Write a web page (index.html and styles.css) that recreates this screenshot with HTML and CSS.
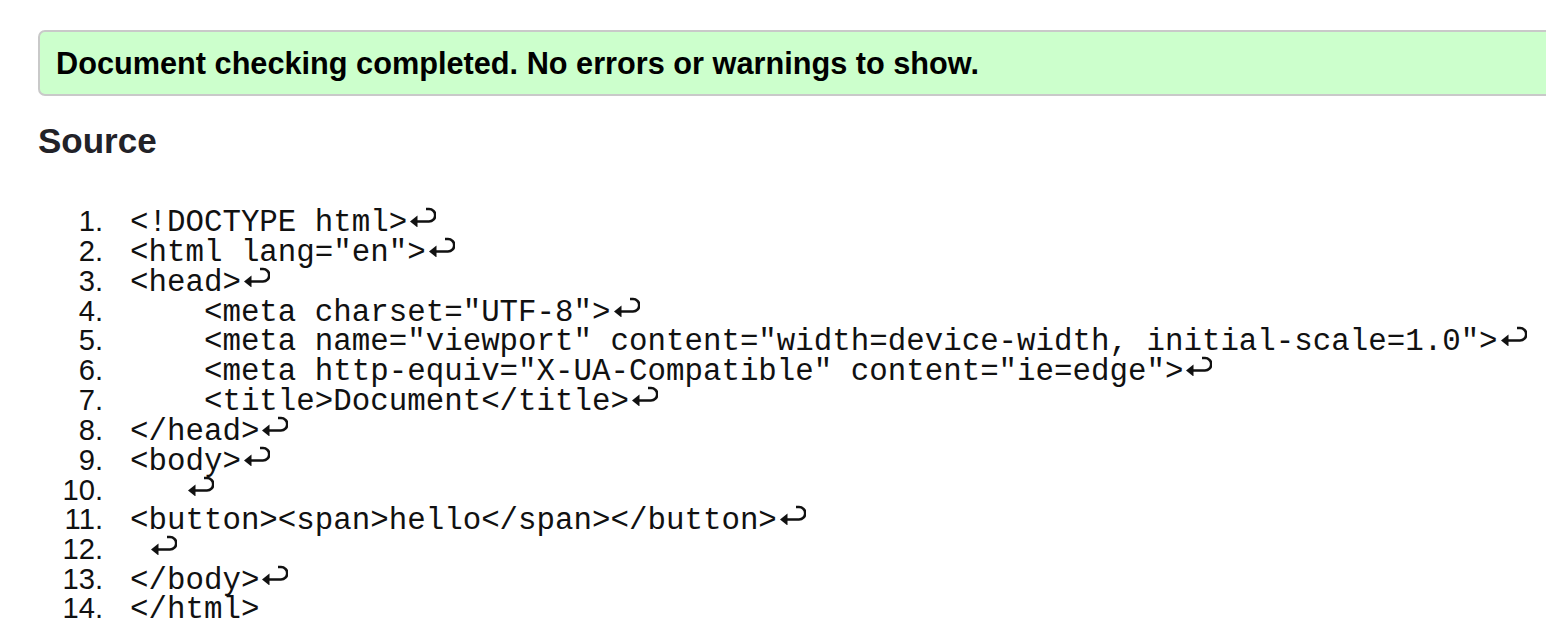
FILE: index.html
```html
<!DOCTYPE html>
<html lang="en">
<head>
<meta charset="UTF-8">
<title>Validation result</title>
<link rel="stylesheet" href="styles.css">
</head>
<body>
<svg class="defs" width="0" height="0" aria-hidden="true">
  <symbol id="lf" viewBox="0 0 26 20">
    <path d="M5 14.5 H19 A6.25 6.25 0 0 0 19 2 H16" fill="none" stroke="#111" stroke-width="2.7" stroke-linecap="butt"/>
    <path d="M0 14.5 L7.5 8.5 L7.5 20.5 Z" fill="#111"/>
  </symbol>
</svg>
<main class="page">
  <div class="status">Document checking completed. No errors or warnings to show.</div>
  <h2 class="heading">Source</h2>
  <ol class="source">
    <li><code>&lt;!DOCTYPE html&gt;<svg class="lf"><use href="#lf"/></svg></code></li>
    <li><code>&lt;html lang="en"&gt;<svg class="lf"><use href="#lf"/></svg></code></li>
    <li><code>&lt;head&gt;<svg class="lf"><use href="#lf"/></svg></code></li>
    <li><code>    &lt;meta charset="UTF-8"&gt;<svg class="lf"><use href="#lf"/></svg></code></li>
    <li><code>    &lt;meta name="viewport" content="width=device-width, initial-scale=1.0"&gt;<svg class="lf"><use href="#lf"/></svg></code></li>
    <li><code>    &lt;meta http-equiv="X-UA-Compatible" content="ie=edge"&gt;<svg class="lf"><use href="#lf"/></svg></code></li>
    <li><code>    &lt;title&gt;Document&lt;/title&gt;<svg class="lf"><use href="#lf"/></svg></code></li>
    <li><code>&lt;/head&gt;<svg class="lf"><use href="#lf"/></svg></code></li>
    <li><code>&lt;body&gt;<svg class="lf"><use href="#lf"/></svg></code></li>
    <li><code>   <svg class="lf"><use href="#lf"/></svg></code></li>
    <li><code>&lt;button&gt;&lt;span&gt;hello&lt;/span&gt;&lt;/button&gt;<svg class="lf"><use href="#lf"/></svg></code></li>
    <li><code> <svg class="lf"><use href="#lf"/></svg></code></li>
    <li><code>&lt;/body&gt;<svg class="lf"><use href="#lf"/></svg></code></li>
    <li><code>&lt;/html&gt;</code></li>
  </ol>
</main>
</body>
</html>
```

FILE: styles.css
```css
html {
  overflow: hidden;
  background: #fff;
}

body {
  margin: 0;
  font-family: "Liberation Sans", Arial, sans-serif;
  color: #000;
}

.defs {
  position: absolute;
  width: 0;
  height: 0;
}

.page {
  padding: 30px 0 0 38px;
}

.status {
  margin-right: -20px;
  padding: 15px 16px 14px;
  border: 2px solid #c9c9c9;
  border-radius: 7px;
  background: #ccffcc;
  font-size: 30.7px;
  line-height: 33px;
  font-weight: bold;
  white-space: nowrap;
}

.heading {
  margin: 25px 0 0;
  font-size: 35px;
  line-height: 40px;
  font-weight: bold;
  color: #222228;
}

.source {
  list-style: none;
  margin: 46px 0 0;
  padding: 0;
  counter-reset: line;
}

.source li {
  display: flex;
  align-items: baseline;
  height: 29.85px;
  counter-increment: line;
}

.source li::before {
  content: counter(line) ".";
  flex: none;
  width: 65px;
  margin-right: 27px;
  text-align: right;
  font-family: "Liberation Sans", Arial, sans-serif;
  font-size: 29.2px;
  line-height: 27px;
  color: #111;
}

.source code {
  font-family: "Liberation Mono", "Courier New", monospace;
  font-size: 30.8px;
  line-height: 29.85px;
  white-space: pre;
  color: #111;
}

.lf {
  display: inline-block;
  width: 26px;
  height: 20px;
  margin-left: 3px;
  vertical-align: 4px;
}
```
